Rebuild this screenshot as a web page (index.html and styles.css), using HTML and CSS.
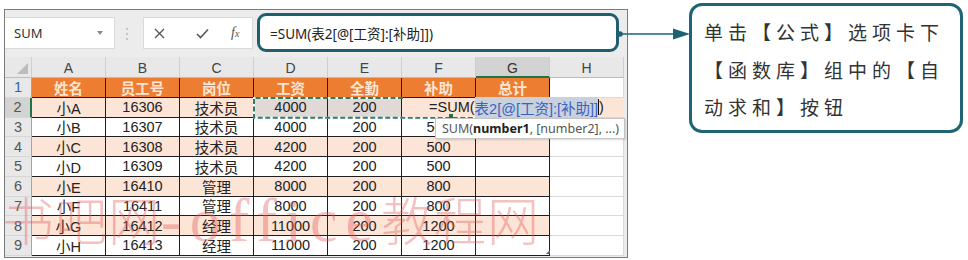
FILE: index.html
```html
<!DOCTYPE html>
<html lang="zh-CN">
<head>
<meta charset="utf-8">
<title>Excel SUM</title>
<link rel="stylesheet" href="styles.css">
</head>
<body>
<div class="page">
  <div class="win">
    <div class="fbar">
      <div class="namebox"><span>SUM</span><span class="dd"></span></div>
      <div class="sep"><i></i><i></i><i></i></div>
      <div class="fxbox">
        <svg class="ic-x" width="11" height="11" viewBox="0 0 11 11"><path d="M1 1L10 10M10 1L1 10" stroke="#555" stroke-width="1.3" fill="none"/></svg>
        <svg class="ic-ok" width="13" height="11" viewBox="0 0 13 11"><path d="M1 6L4.6 9.6L12 1.5" stroke="#555" stroke-width="1.5" fill="none"/></svg>
        <span class="ic-fx"><i>f</i><small>x</small></span>
      </div>
      <div class="formula">=SUM(表2[@[工资]:[补助]])</div>
    </div>
    <div class="sheet">
      <div class="corner"></div>
      <div class="ch">A</div><div class="ch">B</div><div class="ch">C</div><div class="ch">D</div><div class="ch">E</div><div class="ch">F</div><div class="ch sel">G</div><div class="ch">H</div>

      <div class="rh blue">1</div>
      <div class="c hd">姓名</div><div class="c hd">员工号</div><div class="c hd">岗位</div><div class="c hd">工资</div><div class="c hd">全勤</div><div class="c hd">补助</div><div class="c hd">总计</div><div class="h"></div>

      <div class="rh rsel">2</div>
      <div class="c p">小A</div><div class="c p">16306</div><div class="c p">技术员</div><div class="c g">4000</div><div class="c g">200</div><div class="c p">500</div><div class="c p"></div><div class="h"></div>

      <div class="rh">3</div>
      <div class="c">小B</div><div class="c">16307</div><div class="c">技术员</div><div class="c">4000</div><div class="c">200</div><div class="c">500</div><div class="c"></div><div class="h"></div>

      <div class="rh">4</div>
      <div class="c p">小C</div><div class="c p">16308</div><div class="c p">技术员</div><div class="c p">4200</div><div class="c p">200</div><div class="c p">500</div><div class="c p"></div><div class="h"></div>

      <div class="rh">5</div>
      <div class="c">小D</div><div class="c">16309</div><div class="c">技术员</div><div class="c">4200</div><div class="c">200</div><div class="c">500</div><div class="c"></div><div class="h"></div>

      <div class="rh">6</div>
      <div class="c p">小E</div><div class="c p">16410</div><div class="c p">管理</div><div class="c p">8000</div><div class="c p">200</div><div class="c p">800</div><div class="c p"></div><div class="h"></div>

      <div class="rh">7</div>
      <div class="c">小F</div><div class="c">16411</div><div class="c">管理</div><div class="c">8000</div><div class="c">200</div><div class="c">800</div><div class="c"></div><div class="h"></div>

      <div class="rh">8</div>
      <div class="c p">小G</div><div class="c p">16412</div><div class="c p">经理</div><div class="c p">11000</div><div class="c p">200</div><div class="c p">1200</div><div class="c p"></div><div class="h"></div>

      <div class="rh">9</div>
      <div class="c">小H</div><div class="c">16413</div><div class="c">经理</div><div class="c">11000</div><div class="c">200</div><div class="c">1200</div><div class="c"></div><div class="h"></div>

      <svg class="ants" width="230" height="26" viewBox="0 0 230 26">
        <path d="M150 2H1V21.75H223" stroke="#fff" stroke-width="2" fill="none"/>
        <path d="M150 2H1V21.75H223" stroke="#2f7c6c" stroke-width="2" stroke-dasharray="5 2.5" fill="none"/>
      </svg>
      <div class="edit">=SUM(<span class="ref">表2[@[工资]:[补助]]</span><span class="caret"></span>)</div>
      <div class="handle"></div>
      <div class="tip">SUM(<b>number1</b>, [number2], ...)</div>
      <div class="resize"></div>
    </div>
  </div>
  <div class="callout">单击【公式】选项卡下【函数库】组中的【自动求和】按钮</div>
</div>
<svg class="conn" width="80" height="16" viewBox="0 0 80 16">
  <circle cx="5" cy="7" r="2.8" fill="#1d6272"/>
  <line x1="5" y1="7" x2="62" y2="7" stroke="#1d6272" stroke-width="1.5"/>
  <polygon points="58,1.5 75,7 58,12.5" fill="#1d6272"/>
</svg>
<div class="wm">书吧网<span class="lat">-office</span>教程网</div>
</body>
</html>
```
FILE: styles.css
```css
* { box-sizing: border-box; }
html, body { margin: 0; padding: 0; }
body {
  width: 968px;
  height: 260px;
  background: #fff;
  position: relative;
  overflow: hidden;
  font-family: "Liberation Sans", "Noto Sans CJK SC", sans-serif;
}
.page { display: flex; align-items: flex-start; }

.win {
  margin: 9px 0 0 4px;
  width: 624px;
  height: 249px;
  border: 1px solid #7a7a7a;
  background: #ececec;
  display: flex;
  flex-direction: column;
}
.fbar { height: 47px; flex: none; display: flex; align-items: flex-start; }
.namebox {
  margin-top: 7px;
  width: 110px;
  height: 32px;
  background: #fff;
  border: 1px solid #dadada;
  border-left: 0;
  display: flex;
  align-items: center;
  padding: 0 11px 0 9px;
  font-family: "Noto Sans", sans-serif;
  font-size: 13px;
  color: #333;
}
.namebox .dd {
  margin-left: auto;
  width: 0; height: 0;
  border-left: 3.5px solid transparent;
  border-right: 3.5px solid transparent;
  border-top: 4px solid #8a8a8a;
}
.sep {
  width: 28px; height: 47px;
  display: flex; flex-direction: column; align-items: center; justify-content: center;
  gap: 3px; padding-right: 4px;
}
.sep i { width: 2px; height: 2px; background: #c6c6c6; }
.fxbox {
  margin-top: 7px;
  width: 110px; height: 32px;
  background: #fff;
  border: 1px solid #dadada;
  display: flex; align-items: center;
  padding-left: 10px;
}
.ic-ok { margin-left: 31px; }
.ic-fx {
  margin-left: 22px;
  font-family: "Liberation Serif", serif;
  font-size: 14px;
  color: #555;
}
.ic-fx small { font-size: 10px; font-style: italic; }
.formula {
  margin: 3px 0 0 4px;
  width: 362px; height: 39px;
  border: 3px solid #1d5f6f;
  border-radius: 9px;
  background: #fff;
  display: flex; align-items: center;
  padding-left: 10px;
  font-family: "Noto Sans", "Noto Sans CJK SC", sans-serif;
  font-size: 13.5px;
  color: #222;
}

.sheet {
  position: relative;
  display: grid;
  grid-template-columns: 27px repeat(8, 74px);
  grid-template-rows: 21px repeat(9, 19.75px);
}
.corner {
  background: #e8e8e8;
  border-right: 1px solid #cfcfcf;
  border-bottom: 1px solid #bcbcbc;
  position: relative;
}
.corner::after {
  content: "";
  position: absolute; right: 3px; bottom: 3px;
  width: 0; height: 0;
  border-left: 11px solid transparent;
  border-bottom: 11px solid #bdbdbd;
}
.ch {
  background: #e8e8e8;
  border-right: 1px solid #cfcfcf;
  border-bottom: 1px solid #bcbcbc;
  display: flex; align-items: center; justify-content: center;
  font-size: 14px; color: #444;
  padding-top: 2px;
}
.ch.sel { background: #d3d3d3; border-bottom: 2px solid #217346; color: #333; }
.rh {
  background: #e8e8e8;
  border-right: 1px solid #a4a4a4;
  border-bottom: 1px solid #d6d6d6;
  display: flex; align-items: center; justify-content: center;
  font-size: 14.5px; color: #555;
}
.rh.blue { color: #2f64a8; }
.rh.rsel { background: #d3d3d3; border-right: 2px solid #217346; }
.c {
  background: #fff;
  border-right: 1px solid #1e1e1e;
  border-bottom: 1px solid #1e1e1e;
  display: flex; align-items: center; justify-content: center;
  font-size: 14.5px; color: #222;
  white-space: nowrap;
}
.c.hd { background: #ed7d31; color: #fde6d6; font-weight: bold; }
.c.p { background: #fce4d6; }
.c.g { background: #e1d9d5; }
.h {
  background: #fff;
  border-right: 1px solid #dadada;
  border-bottom: 1px solid #dadada;
}

.ants { position: absolute; left: 248px; top: 39px; }
.edit {
  position: absolute;
  left: 398px; top: 40.75px;
  width: 221px; height: 18.75px;
  background: #fce4d6;
  display: flex; align-items: center; justify-content: center;
  font-size: 14.5px; color: #222;
  white-space: nowrap;
  padding-left: 6px;
}
.edit .ref { color: #3a62c0; background: #c9d1de; }
.edit .caret { display: inline-block; width: 1px; height: 16px; background: #111; }
.handle {
  position: absolute; left: 444px; top: 57px;
  width: 4px; height: 4px; background: #217346;
}
.tip {
  position: absolute;
  left: 430px; top: 61px;
  width: 190px; height: 21px;
  background: #fff;
  border: 1px solid #c4c4c4;
  box-shadow: 1px 1px 2px rgba(0,0,0,0.15);
  padding-left: 6px;
  display: flex; align-items: center;
  font-family: "Noto Sans", sans-serif;
  font-size: 12.5px;
  color: #555;
  white-space: nowrap;
}
.tip b { color: #222; }
.resize {
  position: absolute; left: 541px; top: 193px;
  width: 0; height: 0;
  border-left: 4px solid transparent;
  border-bottom: 4px solid #3e5f9c;
}

.callout {
  margin: 3px 0 0 61px;
  width: 274px; height: 130px;
  border: 3px solid #1f6474;
  border-radius: 13px;
  padding: 7px 4px 0 12px;
  font-family: "Noto Sans CJK SC", sans-serif;
  font-size: 19px;
  line-height: 37.5px;
  letter-spacing: 5px;
  color: #333;
}
.conn { position: absolute; left: 615px; top: 27px; }
.wm {
  position: absolute;
  left: 2px; top: 188px;
  font-family: "Liberation Serif", "Noto Sans CJK SC", serif;
  font-weight: 300;
  font-size: 52px;
  line-height: 64px;
  letter-spacing: 1px;
  color: rgba(228, 90, 90, 0.38);
  white-space: nowrap;
  pointer-events: none;
}
.wm .lat { font-size: 62px; letter-spacing: 8px; font-weight: 400; }
```
